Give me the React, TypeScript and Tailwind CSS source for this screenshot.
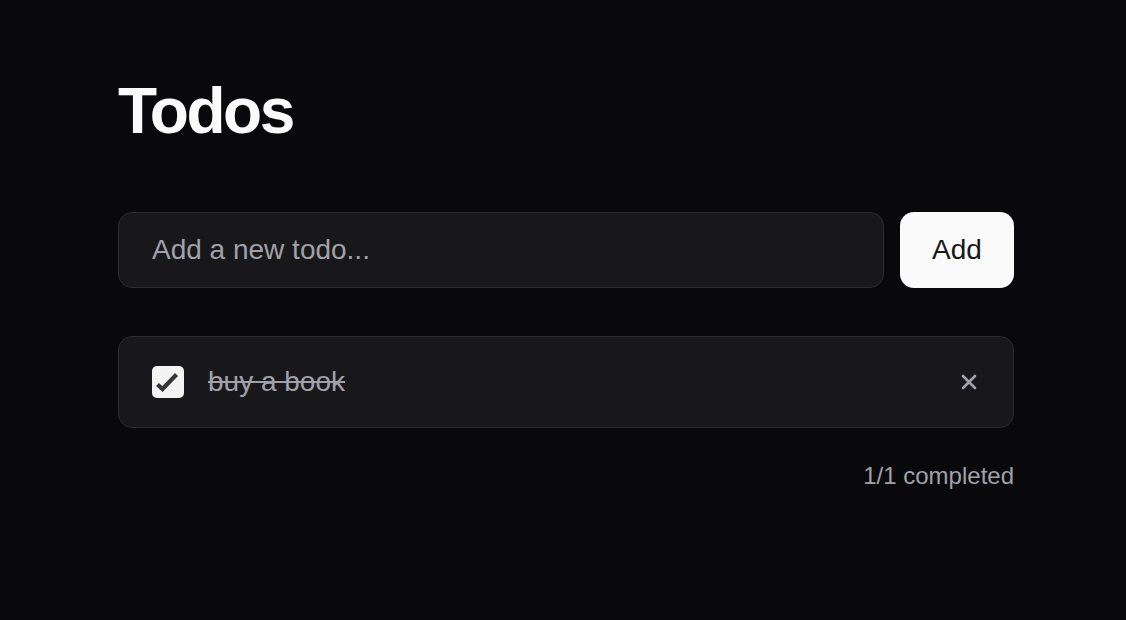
import React from "react";

export default function App() {
  return (
    <div className="min-h-screen w-full bg-[#09090b] font-['Liberation_Sans',Arial,sans-serif]">
      <div className="ml-[118px] w-[896px] pt-[79px]">
        <h1 className="text-[64px] leading-none font-bold tracking-[-2.5px] text-[#fafafa]">Todos</h1>
        <div className="mt-[69px] flex gap-4">
          <div className="flex h-[76px] flex-1 items-center rounded-[14px] border border-[#2c2c30] bg-[#18181b] pl-[33px] pr-8">
            <span className="text-[28px] text-[#a1a1aa]">Add a new todo...</span>
          </div>
          <button className="h-[76px] w-[114px] rounded-[14px] bg-[#fafafa] text-[28px] text-[#18181b]">Add</button>
        </div>
        <div className="mt-12 flex h-[92px] items-center rounded-[14px] border border-[#2c2c30] bg-[#18181b] pl-[33px] pr-8">
          <div className="flex h-8 w-8 items-center justify-center rounded-[5px] bg-[#f4f4f5]">
            <svg width="32" height="32" viewBox="0 0 32 32">
              <path d="M5.5 18.5 L10.5 23 L24.5 8.5" fill="none" stroke="#363638" strokeWidth="4.2" />
            </svg>
          </div>
          <span className="ml-6 flex-1 text-[28px] text-[#a1a1aa] line-through">buy a book</span>
          <button className="flex h-6 w-6 items-center justify-center">
            <svg width="16" height="16" viewBox="0 0 16 16">
              <path d="M2 2 L14 14 M14 2 L2 14" stroke="#a1a1aa" strokeWidth="2.6" strokeLinecap="round" />
            </svg>
          </button>
        </div>
        <div className="mt-[30px] text-right text-[24px] text-[#a1a1aa]">1/1 completed</div>
      </div>
    </div>
  );
}
